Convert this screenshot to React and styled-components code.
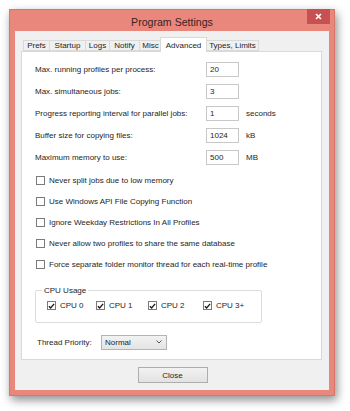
import React from 'react'
import styled, { createGlobalStyle } from 'styled-components'

const GlobalStyle = createGlobalStyle`
  html, body {
    margin: 0;
    padding: 0;
    background: #ffffff;
  }
  body {
    font-family: "Liberation Sans", Arial, sans-serif;
    font-size: 8px;
    color: #1e1e1e;
  }
`

const TABS = ['Prefs', 'Startup', 'Logs', 'Notify', 'Misc', 'Advanced', 'Types, Limits']
const TAB_WIDTHS = [26, 36, 24, 30, 22, 47, 53]

const NUMBERS = [
  { label: 'Max. running profiles per process:', value: '20' },
  { label: 'Max. simultaneous jobs:', value: '3' },
  { label: 'Progress reporting interval for parallel jobs:', value: '1', unit: 'seconds' },
  { label: 'Buffer size for copying files:', value: '1024', unit: 'kB' },
  { label: 'Maximum memory to use:', value: '500', unit: 'MB' },
]

const OPTIONS = [
  'Never split jobs due to low memory',
  'Use Windows API File Copying Function',
  'Ignore Weekday Restrictions In All Profiles',
  'Never allow two profiles to share the same database',
  'Force separate folder monitor thread for each real-time profile',
]

const CPUS = [
  { label: 'CPU 0', width: 49 },
  { label: 'CPU 1', width: 52 },
  { label: 'CPU 2', width: 55 },
  { label: 'CPU 3+', width: 50 },
]

function Check({ checked }) {
  return (
    <Box>
      {checked && (
        <svg width="8" height="8" viewBox="0 0 8 8">
          <path d="M1 4.2 L3 6.3 L7 1.5" fill="none" stroke="#1a1a1a" strokeWidth="1.5" />
        </svg>
      )}
    </Box>
  )
}

export default function App() {
  return (
    <>
      <GlobalStyle />
      <Page>
        <Window>
          <TitleBar>
            <Title>Program Settings</Title>
            <CloseX>
              <svg width="7" height="7" viewBox="0 0 7 7">
                <path d="M1 1 L6 6 M6 1 L1 6" stroke="#ffffff" strokeWidth="1.6" />
              </svg>
            </CloseX>
          </TitleBar>
          <Client>
            <TabStrip>
              {TABS.map((t, i) => (
                <Tab key={t} active={t === 'Advanced'} style={{ width: TAB_WIDTHS[i] }}>
                  {t}
                </Tab>
              ))}
            </TabStrip>
            <Panel>
              <NumberGrid>
                {NUMBERS.map(n => (
                  <NumberRow key={n.label}>
                    <span>{n.label}</span>
                    <Field>{n.value}</Field>
                    <Unit>{n.unit}</Unit>
                  </NumberRow>
                ))}
              </NumberGrid>
              <Options>
                {OPTIONS.map(o => (
                  <OptionRow key={o}>
                    <Check />
                    <span>{o}</span>
                  </OptionRow>
                ))}
              </Options>
              <Group>
                <Legend>CPU Usage</Legend>
                <CpuRow>
                  {CPUS.map(c => (
                    <CpuItem key={c.label} style={{ width: c.width }}>
                      <Check checked />
                      <span>{c.label}</span>
                    </CpuItem>
                  ))}
                </CpuRow>
              </Group>
              <PriorityRow>
                <span>Thread Priority:</span>
                <Select>
                  <span>Normal</span>
                  <svg width="6" height="4" viewBox="0 0 6 4">
                    <path d="M0.5 0.5 L3 3 L5.5 0.5" fill="none" stroke="#555" strokeWidth="1" />
                  </svg>
                </Select>
              </PriorityRow>
            </Panel>
            <Footer>
              <Button>Close</Button>
            </Footer>
          </Client>
        </Window>
      </Page>
    </>
  )
}

const Page = styled.div`
  width: 350px;
  height: 411px;
  padding: 9px 15px 0 9px;
  box-sizing: border-box;
`

const Window = styled.div`
  width: 326px;
  height: 387px;
  box-sizing: border-box;
  background: #e9877c;
  border: 1px solid #d8766b;
  box-shadow: 2px 4px 9px rgba(0, 0, 0, 0.45);
  display: flex;
  flex-direction: column;
  padding: 0 5px 5px 5px;
`

const TitleBar = styled.div`
  position: relative;
  height: 21px;
  display: flex;
  align-items: center;
  justify-content: center;
`

const Title = styled.div`
  font-size: 10.6px;
  color: #3b2220;
  padding-top: 2px;
`

const CloseX = styled.div`
  position: absolute;
  top: -1px;
  right: -1px;
  width: 23px;
  height: 15px;
  background: #c75050;
  display: flex;
  align-items: center;
  justify-content: center;
`

const Client = styled.div`
  flex: 1;
  background: #f0f0f0;
  display: flex;
  flex-direction: column;
  padding: 6px 7px 0 6px;
`

const TabStrip = styled.div`
  display: flex;
  align-items: flex-end;
  height: 14px;
  padding-left: 2px;
  position: relative;
  z-index: 1;
`

const Tab = styled.div`
  box-sizing: border-box;
  height: ${p => (p.active ? '15px' : '11px')};
  margin: ${p => (p.active ? '0 -1px -1px -1px' : '0')};
  padding-top: ${p => (p.active ? '1px' : '0')};
  display: flex;
  align-items: center;
  justify-content: center;
  white-space: nowrap;
  background: ${p => (p.active ? '#ffffff' : '#f0f0f0')};
  border: 1px solid #d9d9d9;
  border-bottom: ${p => (p.active ? 'none' : '1px solid #d9d9d9')};
  border-right-width: ${p => (p.active ? '1px' : '0')};
  &:last-child {
    border-right-width: 1px;
  }
  &:nth-child(5) {
    border-right-width: 0;
  }
`

const Panel = styled.div`
  height: 309px;
  box-sizing: border-box;
  background: #ffffff;
  border: 1px solid #d9d9d9;
  padding: 7px 0 0 13px;
  display: flex;
  flex-direction: column;
`

const NumberGrid = styled.div`
  display: flex;
  flex-direction: column;
`

const NumberRow = styled.div`
  display: grid;
  grid-template-columns: 164px 33px auto;
  column-gap: 7px;
  align-items: center;
  height: 21.8px;
`

const Field = styled.div`
  height: 15px;
  box-sizing: border-box;
  border: 1px solid #c8c8c8;
  background: #ffffff;
  display: flex;
  align-items: center;
  padding-left: 3px;
`

const Unit = styled.span`
  color: #1e1e1e;
`

const Options = styled.div`
  display: flex;
  flex-direction: column;
  margin-top: 2px;
`

const OptionRow = styled.div`
  display: flex;
  align-items: center;
  gap: 4px;
  height: 21px;
  padding-left: 1px;
`

const Box = styled.div`
  width: 9px;
  height: 9px;
  box-sizing: border-box;
  border: 1px solid #7a7a7a;
  background: #ffffff;
  display: flex;
  align-items: center;
  justify-content: center;
  flex: none;
`

const Group = styled.fieldset`
  margin: 12px 0 0 0;
  padding: 2px 0 0 11px;
  width: 227px;
  height: 36px;
  box-sizing: border-box;
  border: 1px solid #dcdcdc;
  border-radius: 2px;
`

const Legend = styled.legend`
  padding: 0 2px;
  margin-left: -5px;
  font-size: 8px;
  line-height: 8px;
`

const CpuRow = styled.div`
  display: flex;
  align-items: center;
  height: 18px;
`

const CpuItem = styled.div`
  display: flex;
  align-items: center;
  gap: 4px;
`

const PriorityRow = styled.div`
  display: flex;
  align-items: center;
  margin-top: 12px;
  padding-left: 2px;
  & > span {
    width: 64px;
  }
`

const Select = styled.div`
  width: 66px;
  height: 15px;
  box-sizing: border-box;
  border: 1px solid #b4b4b4;
  background: linear-gradient(#f2f2f2, #e4e4e4);
  display: flex;
  align-items: center;
  justify-content: space-between;
  padding: 0 4px 0 3px;
`

const Footer = styled.div`
  display: flex;
  justify-content: center;
  padding-top: 7px;
`

const Button = styled.div`
  width: 70px;
  height: 16px;
  box-sizing: border-box;
  border: 1px solid #adadad;
  background: linear-gradient(#f2f2f2, #e2e2e2);
  display: flex;
  align-items: center;
  justify-content: center;
  margin-left: 2px;
`
